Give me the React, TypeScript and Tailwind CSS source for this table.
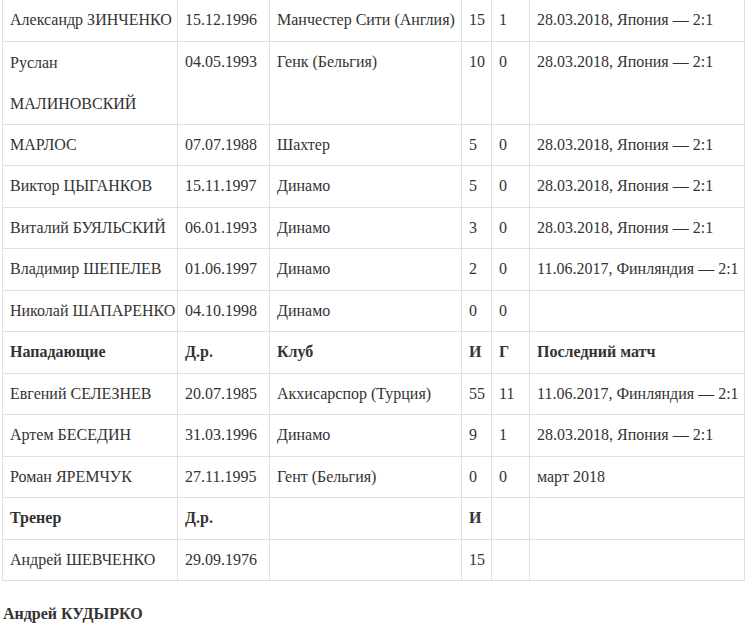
import React from "react";

type Row = { cells: string[]; head?: boolean };

const rows: Row[] = [
  { cells: ["Александр ЗИНЧЕНКО", "15.12.1996", "Манчестер Сити (Англия)", "15", "1", "28.03.2018, Япония — 2:1"] },
  { cells: ["Руслан\nМАЛИНОВСКИЙ", "04.05.1993", "Генк (Бельгия)", "10", "0", "28.03.2018, Япония — 2:1"] },
  { cells: ["МАРЛОС", "07.07.1988", "Шахтер", "5", "0", "28.03.2018, Япония — 2:1"] },
  { cells: ["Виктор ЦЫГАНКОВ", "15.11.1997", "Динамо", "5", "0", "28.03.2018, Япония — 2:1"] },
  { cells: ["Виталий БУЯЛЬСКИЙ", "06.01.1993", "Динамо", "3", "0", "28.03.2018, Япония — 2:1"] },
  { cells: ["Владимир ШЕПЕЛЕВ", "01.06.1997", "Динамо", "2", "0", "11.06.2017, Финляндия — 2:1"] },
  { cells: ["Николай ШАПАРЕНКО", "04.10.1998", "Динамо", "0", "0", ""] },
  { cells: ["Нападающие", "Д.р.", "Клуб", "И", "Г", "Последний матч"], head: true },
  { cells: ["Евгений СЕЛЕЗНЕВ", "20.07.1985", "Акхисарспор (Турция)", "55", "11", "11.06.2017, Финляндия — 2:1"] },
  { cells: ["Артем БЕСЕДИН", "31.03.1996", "Динамо", "9", "1", "28.03.2018, Япония — 2:1"] },
  { cells: ["Роман ЯРЕМЧУК", "27.11.1995", "Гент (Бельгия)", "0", "0", "март 2018"] },
  { cells: ["Тренер", "Д.р.", "", "И", "", ""], head: true },
  { cells: ["Андрей ШЕВЧЕНКО", "29.09.1976", "", "15", "", ""] },
];

const widths = ["w-[175px]", "w-[92px]", "w-[192px]", "w-[30px]", "w-[38px]", "w-auto"];

export default function App() {
  return (
    <div className="bg-white text-[#333] text-[16px] font-['Liberation_Serif','Times_New_Roman',serif] pl-[2px] pr-[3px] overflow-hidden h-[643px]">
      <table className="w-full table-fixed border-collapse -mt-[1px]">
        <tbody>
          {rows.map((row, i) => (
            <tr key={i}>
              {row.cells.map((c, j) => (
                <td
                  key={j}
                  className={`border border-[#e0e0e0] px-[7px] leading-[40.5px] align-top whitespace-nowrap ${widths[j]} ${row.head ? "font-bold" : ""}`}
                >
                  {c.includes("\n")
                    ? c.split("\n").map((p, k) => (
                        <div key={k} className="leading-[41px]">
                          {p}
                        </div>
                      ))
                    : c}
                </td>
              ))}
            </tr>
          ))}
        </tbody>
      </table>
      <p className="font-bold mt-[21px] leading-[24px] pl-[1px]">Андрей КУДЫРКО</p>
    </div>
  );
}
